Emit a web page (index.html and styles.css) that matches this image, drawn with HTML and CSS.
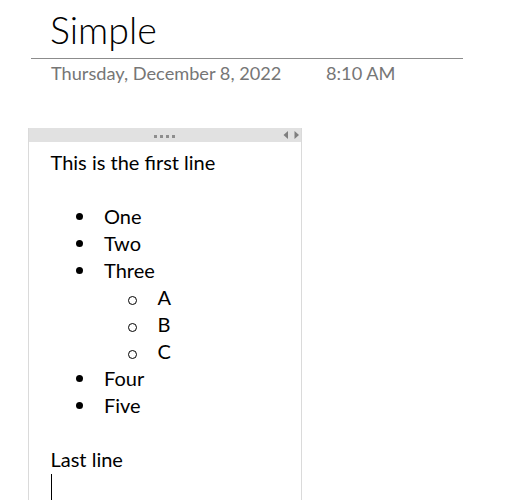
FILE: index.html
```html
<!DOCTYPE html>
<html>
<head>
<meta charset="utf-8">
<link rel="stylesheet" href="styles.css">
</head>
<body>
<div class="page">
  <h1 class="title">Simple</h1>
  <div class="rule"></div>
  <div class="meta">
    <span class="date">Thursday, December 8, 2022</span>
    <span class="time">8:10 AM</span>
  </div>
  <div class="card">
    <div class="bar">
      <div class="grip"><i></i><i></i><i></i><i></i></div>
      <div class="arrows">
        <svg width="17" height="8" viewBox="0 0 17 8"><path d="M5 0 L0.5 4 L5 8 Z" fill="#7f7f7f"/><path d="M11.5 0 L16 4 L11.5 8 Z" fill="#7f7f7f"/></svg>
      </div>
    </div>
    <div class="content">
      <div class="line">This is the first line</div>
      <div class="line blank"></div>
      <div class="line l1"><span class="dot"></span>One</div>
      <div class="line l1"><span class="dot"></span>Two</div>
      <div class="line l1"><span class="dot"></span>Three</div>
      <div class="line l2"><span class="circ"></span>A</div>
      <div class="line l2"><span class="circ"></span>B</div>
      <div class="line l2"><span class="circ"></span>C</div>
      <div class="line l1"><span class="dot"></span>Four</div>
      <div class="line l1"><span class="dot"></span>Five</div>
      <div class="line blank"></div>
      <div class="line">Last line</div>
      <div class="cursor"></div>
    </div>
  </div>
</div>
</body>
</html>
```
FILE: styles.css
```css
html, body {
  margin: 0;
  padding: 0;
  background: #fff;
}
body {
  font-family: Lato, "Liberation Sans", sans-serif;
  color: #000;
  overflow: hidden;
  height: 500px;
}
.page {
  width: 514px;
}
.title {
  margin: 0;
  padding: 5px 0 3px 50px;
  font-size: 37.5px;
  font-weight: 300;
  line-height: 50px;
  height: 50px;
}
.rule {
  margin-left: 31px;
  width: 432px;
  height: 1px;
  background: #8c8c8c;
}
.meta {
  display: flex;
  margin-top: 4px;
  padding-left: 51px;
  font-size: 18.2px;
  line-height: 20px;
  color: #767676;
}
.date {
  width: 275px;
}
.card {
  margin-top: 45px;
  margin-left: 28px;
  width: 272px;
  border-left: 1px solid #dadada;
  border-right: 1px solid #dadada;
}
.bar {
  position: relative;
  height: 14px;
  background: #e1e1e1;
  display: flex;
  justify-content: center;
  align-items: center;
}
.grip {
  display: flex;
  gap: 3px;
  margin-top: 2px;
  margin-left: -2px;
}
.grip i {
  display: block;
  width: 3px;
  height: 3px;
  background: #8e8e8e;
}
.arrows {
  position: absolute;
  right: 1px;
  top: 3px;
  line-height: 0;
}
.content {
  padding: 7px 0 0 21.5px;
  font-size: 20px;
}
.line {
  height: 27px;
  line-height: 27px;
  white-space: nowrap;
}
.dot {
  display: inline-block;
  width: 7px;
  height: 7px;
  border-radius: 50%;
  background: #000;
  margin-left: 25.5px;
  margin-right: 21px;
  vertical-align: 4px;
}
.circ {
  display: inline-block;
  box-sizing: border-box;
  width: 9px;
  height: 9px;
  border-radius: 50%;
  border: 1.3px solid #000;
  margin-left: 77px;
  margin-right: 21px;
  vertical-align: 0;
}
.cursor {
  margin-top: 1px;
  width: 1px;
  height: 26px;
  background: #000;
}
```
